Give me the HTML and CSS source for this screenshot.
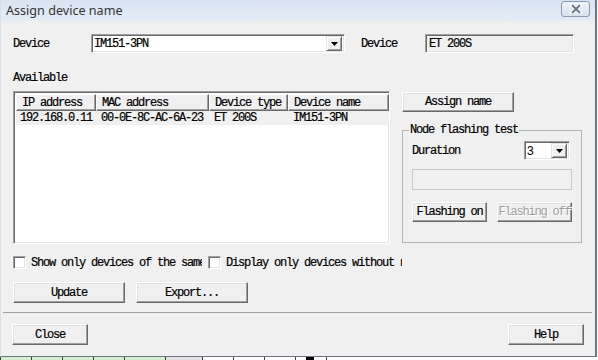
FILE: index.html
```html
<!doctype html>
<html>

<head>
  <title>Assign device name</title>
  <meta charset="utf-8">
  <link rel="stylesheet" href="styles.css">
</head>

<body>
  <div class="window">
    <div class="titlebar">
      <span class="title">Assign device name</span>
      <span class="close-x">
        <svg width="14" height="10" viewBox="0 0 14 10">
          <path d="M3 1 L11 9 M11 1 L3 9" stroke="#ffffff" stroke-width="4" stroke-linecap="square" fill="none"/>
          <path d="M3 1 L11 9 M11 1 L3 9" stroke="#6b7585" stroke-width="2" fill="none"/>
        </svg>
      </span>
    </div>

    <div class="content">
      <!-- device selection -->
      <div class="device-row">
        <span class="lbl lbl-device">Device</span>
        <div class="combo combo-device sunken">
          <span class="combo-text">IM151-3PN</span>
          <span class="drop raised">
            <svg width="7" height="4" viewBox="0 0 7 4"><path d="M0 0 H7 L3.5 4 Z" fill="#000"/></svg>
          </span>
        </div>
        <span class="lbl lbl-device2">Device</span>
        <div class="field field-type sunken">ET 200S</div>
      </div>

      <div class="main">
        <div class="left">
          <div class="lbl lbl-available">Available</div>
          <div class="listbox sunken">
            <table class="devices">
              <colgroup>
                <col class="c-ip">
                <col class="c-mac">
                <col class="c-type">
                <col class="c-name">
              </colgroup>
              <tr>
                <th>IP address</th>
                <th>MAC address</th>
                <th>Device type</th>
                <th>Device name</th>
              </tr>
              <tr class="selected">
                <td>192.168.0.11</td>
                <td>00-0E-8C-AC-6A-23</td>
                <td>ET 200S</td>
                <td>IM151-3PN</td>
              </tr>
            </table>
          </div>
        </div>

        <div class="right">
          <button class="btn btn-assign">Assign name</button>
          <fieldset class="group">
            <legend>Node flashing test</legend>
            <div class="duration-row">
              <span>Duration</span>
              <div class="combo combo-small sunken">
                <span class="combo-text num">3</span>
                <span class="drop raised">
                  <svg width="7" height="4" viewBox="0 0 7 4"><path d="M0 0 H7 L3.5 4 Z" fill="#000"/></svg>
                </span>
              </div>
            </div>
            <div class="field field-empty"></div>
            <div class="flash-row">
              <button class="btn btn-flash">Flashing on</button>
              <button class="btn btn-flash" disabled>Flashing off</button>
            </div>
          </fieldset>
        </div>
      </div>

      <div class="checks">
        <label class="check check-same"><span class="box sunken"></span>Show only devices of the same type</label>
        <label class="check check-noname"><span class="box sunken"></span>Display only devices without names</label>
      </div>

      <div class="actions">
        <button class="btn btn-wide">Update</button>
        <button class="btn btn-wide">Export...</button>
      </div>
    </div>

    <div class="separator"></div>

    <div class="footer">
      <button class="btn btn-footer">Close</button>
      <button class="btn btn-footer">Help</button>
    </div>
  </div>

  <!-- sheet behind the dialog -->
  <div class="behind">
    <span class="cell green"></span>
    <span class="cell green"></span>
    <span class="cell green"></span>
    <span class="cell green"></span>
    <span class="cell green wide"></span>
    <span class="cell gray"></span>
    <span class="cell"></span>
    <span class="cell"></span>
    <span class="cell"></span>
    <span class="cell mark"></span>
    <span class="cell"></span>
  </div>
</body>

</html>
```

FILE: styles.css
```css
body {
  margin: 0;
  background-color: #ffffff;
  color: #000;
  font-family: "Liberation Mono", monospace;
  font-size: 12px;
  letter-spacing: -1.2px;
  -webkit-text-stroke: 0.2px #000;
  overflow: hidden;
}

.window {
  width: 597px;
  height: 357px;
  box-sizing: border-box;
  background-color: #f0f0f0;
  border-left: 1px solid #d6e0ec;
  border-right: 2px solid #6d7580;
  border-bottom: 1px solid #6d7580;
  display: flex;
  flex-direction: column;
}

/* title bar */
.titlebar {
  height: 21px;
  flex: none;
  display: flex;
  align-items: center;
  justify-content: space-between;
  padding: 0 5px;
  background: linear-gradient(#d9e4f1, #e4ecf6);
}

.title {
  font-family: "Noto Sans", sans-serif;
  font-size: 12.6px;
  letter-spacing: 0;
  color: #333333;
  -webkit-text-stroke: 0;
}

.close-x {
  width: 29px;
  height: 16px;
  box-sizing: border-box;
  margin-top: -3px;
  border: 1px solid #8d9bb0;
  border-radius: 3px;
  background: linear-gradient(#eef3f9, #d7e1ee);
  display: flex;
  align-items: center;
  justify-content: center;
}

/* 3d borders */
.sunken {
  box-sizing: border-box;
  border: 1px solid;
  border-color: #a0a0a0 #ffffff #ffffff #a0a0a0;
  box-shadow: inset 1px 1px #696969, inset -1px -1px #e3e3e3;
}

.raised {
  box-sizing: border-box;
  border: 1px solid;
  border-color: #e3e3e3 #696969 #696969 #e3e3e3;
  box-shadow: inset 1px 1px #ffffff, inset -1px -1px #a0a0a0;
  background-color: #f0f0f0;
}

.btn {
  font: inherit;
  letter-spacing: inherit;
  color: #000;
  padding: 0;
  box-sizing: border-box;
  background-color: #f0f0f0;
  border: 1px solid;
  border-color: #ffffff #696969 #696969 #ffffff;
  box-shadow: inset -1px -1px #a0a0a0, inset 1px 1px #e3e3e3;
  overflow: visible;
  white-space: nowrap;
}

.btn:disabled {
  color: #a0a0a0;
  -webkit-text-stroke: 0;
  text-shadow: 1px 1px #ffffff;
}

.content {
  padding-left: 12px;
}

/* device row */
.device-row {
  margin-top: 13px;
  height: 19px;
  display: flex;
  align-items: center;
}

.lbl-device {
  width: 78px;
}

.lbl-device2 {
  margin-left: 16px;
  width: 64px;
}

.combo {
  height: 19px;
  background-color: #ffffff;
  display: flex;
  align-items: center;
  justify-content: space-between;
  padding: 2px;
}

.combo-device {
  width: 254px;
}

.combo-text.num {
  font-family: "Liberation Sans", sans-serif;
  font-size: 12px;
  letter-spacing: 0;
  -webkit-text-stroke: 0;
}

.drop {
  width: 16px;
  height: 15px;
  display: flex;
  align-items: center;
  justify-content: center;
}

.field {
  height: 19px;
  box-sizing: border-box;
  padding: 2px 3px;
  line-height: 14px;
}

.field-type {
  width: 149px;
  background-color: #f0f0f0;
}

/* list + side panel */
.main {
  margin-top: 18px;
  display: flex;
  gap: 12px;
}

.left {
  width: 377px;
}

.lbl-available {
  height: 14px;
  line-height: 14px;
}

.listbox {
  margin-top: 6px;
  height: 153px;
  background-color: #ffffff;
  padding: 2px;
}

.devices {
  width: 373px;
  table-layout: fixed;
  border-collapse: separate;
  border-spacing: 0;
}

.c-ip {
  width: 80px;
}

.c-mac {
  width: 113px;
}

.c-type {
  width: 79px;
}

.c-name {
  width: 101px;
}

.devices th {
  height: 17px;
  box-sizing: border-box;
  padding: 0 0 0 5px;
  text-align: left;
  font-weight: normal;
  background-color: #f0f0f0;
  border-top: 1px solid #ffffff;
  border-left: 1px solid #ffffff;
  border-right: 1px solid #696969;
  border-bottom: 1px solid #696969;
  box-shadow: inset -1px -1px #a0a0a0;
  white-space: nowrap;
  overflow: hidden;
}

.devices td {
  height: 14px;
  padding: 0 0 0 5px;
  white-space: nowrap;
  overflow: hidden;
}

.devices td:first-child {
  padding-left: 4px;
}

.selected td {
  background-color: #f0f0f0;
}

.right {
  width: 180px;
  padding-top: 21px;
}

.btn-assign {
  width: 112px;
  height: 20px;
  display: block;
}

.group {
  margin: 12px 0 0 0;
  height: 119px;
  box-sizing: border-box;
  min-width: 0;
  padding: 0 9px;
  border: 1px solid #b4b4b4;
}

.group legend {
  padding: 0 1px;
  margin-left: -3px;
  line-height: 13px;
}

.duration-row {
  margin-top: 4px;
  height: 19px;
  display: flex;
  align-items: center;
  justify-content: space-between;
}

.combo-small {
  width: 46px;
  margin-right: 2px;
}

.field-empty {
  margin-top: 9px;
  height: 21px;
  border: 1px solid #c9c9c9;
  background-color: #f0f0f0;
}

.flash-row {
  margin-top: 12px;
  display: flex;
  justify-content: space-between;
}

.btn-flash {
  width: 75px;
  height: 20px;
}

/* checkboxes */
.checks {
  margin-top: 12px;
  height: 13px;
  display: flex;
}

.check {
  display: flex;
  align-items: center;
  white-space: nowrap;
  overflow: hidden;
}

.check-same {
  width: 189px;
}

.check-noname {
  width: 194px;
  margin-left: 6px;
}

.box {
  width: 13px;
  height: 13px;
  flex: none;
  margin-right: 5px;
  background-color: #ffffff;
}

.actions {
  margin-top: 13px;
  display: flex;
  gap: 11px;
}

.btn-wide {
  width: 112px;
  height: 21px;
}

.separator {
  margin: 9px 3px 0 2px;
  height: 1px;
  background-color: #a0a0a0;
}

.footer {
  margin-top: 11px;
  padding: 0 11px;
  display: flex;
  justify-content: space-between;
}

.btn-footer {
  width: 76px;
  height: 21px;
}

/* spreadsheet peeking out below */
.behind {
  height: 3px;
  display: flex;
}

.cell {
  width: 30px;
  border-left: 1px solid #404040;
  background-color: #ffffff;
}

.cell.green {
  background-color: #d3efd0;
}

.cell.green.wide {
  width: 40px;
}

.cell.gray {
  width: 36px;
  background-color: #e2e2e2;
}

.cell.mark {
  background: linear-gradient(90deg, #ffffff 35%, #000 35%, #000 60%, #ffffff 60%);
}
```
